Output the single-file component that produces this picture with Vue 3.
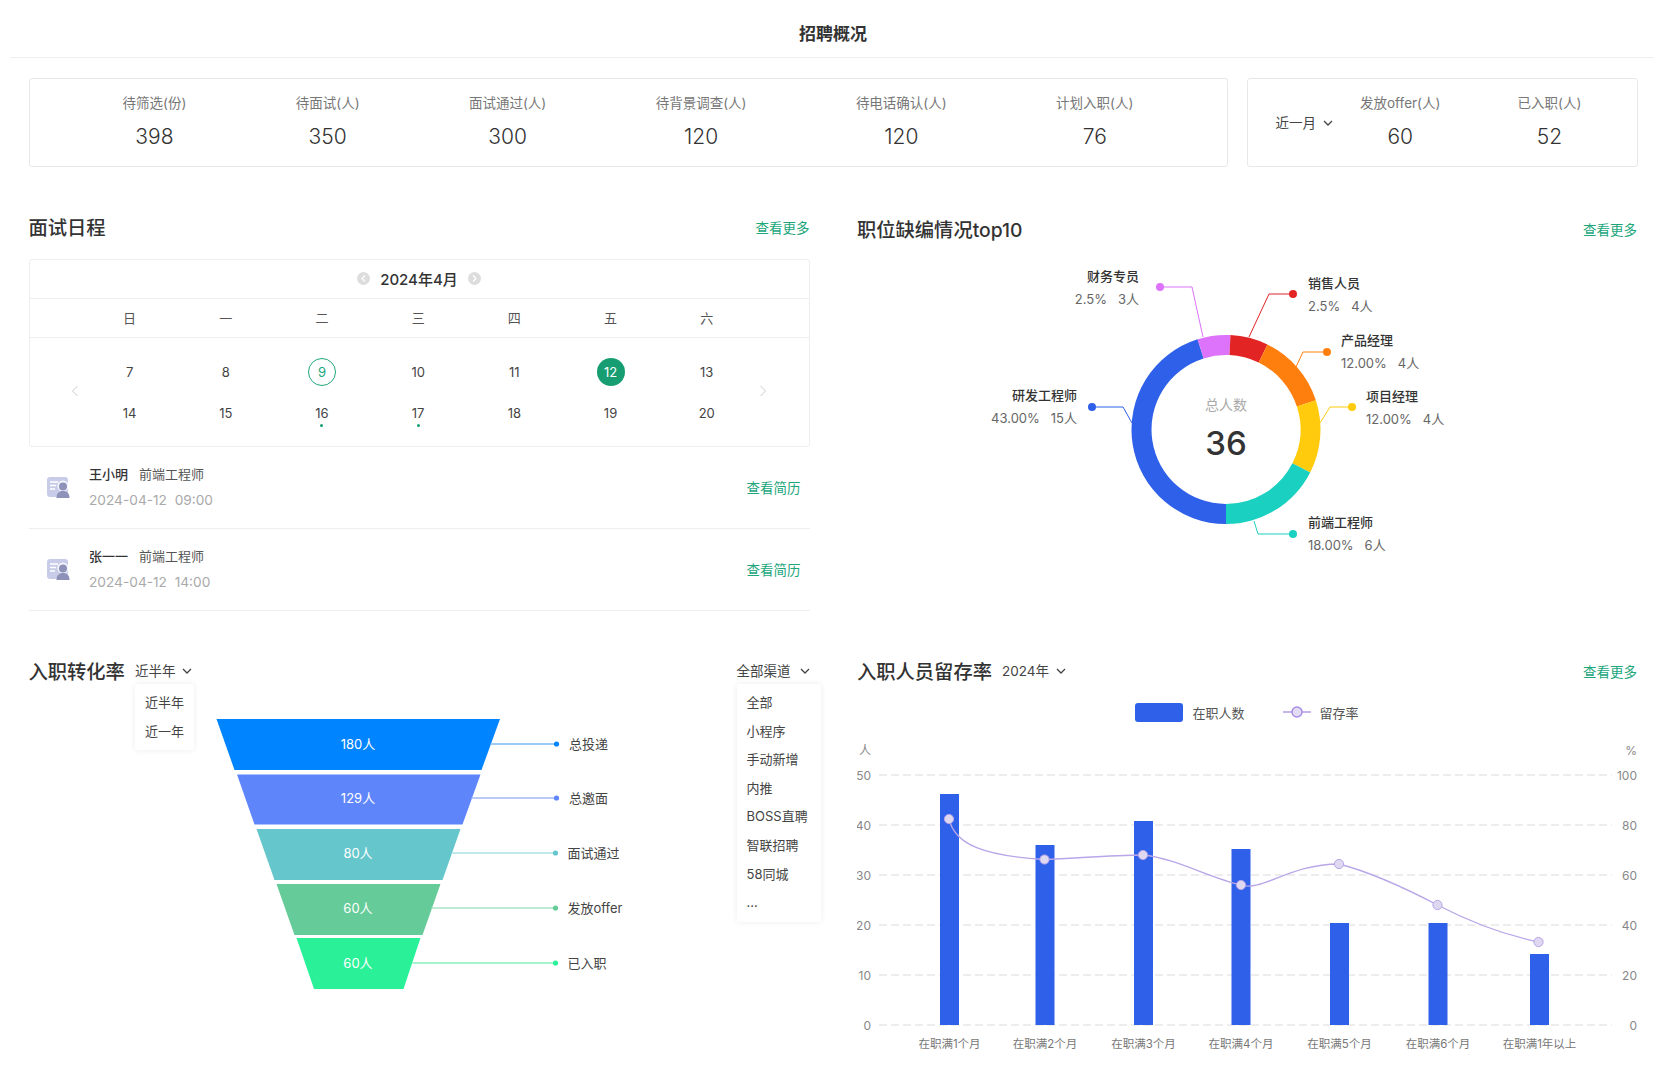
<template>
  <div class="page">
    <div class="top-title">招聘概况</div>

    <div class="stats">
      <div class="stat-box stat-main">
        <div v-for="s in mainStats" :key="s.label" class="stat">
          <div class="stat-label">{{ s.label }}</div>
          <div class="stat-value">{{ s.value }}</div>
        </div>
      </div>
      <div class="stat-box stat-side">
        <div class="filter filter-range">近一月
          <svg class="chev" width="10" height="6" viewBox="0 0 10 6"><polyline points="1,1 5,5 9,1" /></svg>
        </div>
        <div v-for="s in sideStats" :key="s.label" class="stat">
          <div class="stat-label">{{ s.label }}</div>
          <div class="stat-value">{{ s.value }}</div>
        </div>
      </div>
    </div>

    <div class="grid">
      <!-- 面试日程 -->
      <section class="panel">
        <div class="panel-head">
          <h2>面试日程</h2>
          <a class="more">查看更多</a>
        </div>
        <div class="calendar">
          <div class="cal-head">
            <span class="round-btn"><svg width="5" height="7" viewBox="0 0 5 7"><polyline points="4,0.5 1,3.5 4,6.5" /></svg></span>
            <span class="cal-month">2024年4月</span>
            <span class="round-btn"><svg width="5" height="7" viewBox="0 0 5 7"><polyline points="1,0.5 4,3.5 1,6.5" /></svg></span>
          </div>
          <div class="cal-week">
            <span v-for="w in weekdays" :key="w">{{ w }}</span>
          </div>
          <div class="cal-body">
            <svg class="cal-arrow left" width="8" height="12" viewBox="0 0 8 12"><polyline points="6.5,1 1.5,6 6.5,11" /></svg>
            <div class="cal-days">
              <div v-for="d in days" :key="d.n" class="day">
                <span class="day-num" :class="{ today: d.today, active: d.active }">{{ d.n }}</span>
                <i v-if="d.dot" class="day-dot"></i>
              </div>
            </div>
            <svg class="cal-arrow right" width="8" height="12" viewBox="0 0 8 12"><polyline points="1.5,1 6.5,6 1.5,11" /></svg>
          </div>
        </div>
        <div v-for="p in interviews" :key="p.name" class="person">
          <svg class="person-icon" width="24" height="22" viewBox="0 0 24 22">
            <rect x="0" y="0" width="21" height="20" rx="3" fill="#c8cce9" />
            <path d="M3 5h8M3 8.5h6M3 12h5" stroke="#fff" stroke-width="1.3" fill="none" />
            <circle cx="16" cy="9" r="5.6" fill="#fff" opacity="0.8" />
            <circle cx="16" cy="9.5" r="4" fill="#8e92b8" />
            <path d="M9.5 21c0-5 3-7 6.5-7s6.5 2 6.5 7z" fill="#8e92b8" />
          </svg>
          <div class="person-info">
            <div class="person-line"><b>{{ p.name }}</b><span>前端工程师</span></div>
            <div class="person-time">{{ p.time }}</div>
          </div>
          <a class="more">查看简历</a>
        </div>
      </section>

      <!-- 职位缺编 -->
      <section class="panel panel-shift">
        <div class="panel-head">
          <h2>职位缺编情况top10</h2>
          <a class="more">查看更多</a>
        </div>
        <svg class="chart pie-chart" width="780" height="363" viewBox="857 247 780 363">
          <path v-for="a in arcs" :key="a.color" :d="a.d" :fill="a.color" />
          <g v-for="l in pieLabels" :key="l.name">
            <polyline :points="l.line" :stroke="l.color" stroke-width="1" fill="none" />
            <circle :cx="l.dot[0]" :cy="l.dot[1]" r="4" :fill="l.color" />
            <text :x="l.x" :y="l.y" :text-anchor="l.anchor" class="pie-name">{{ l.name }}</text>
            <text :x="l.x" :y="l.y + 23" :text-anchor="l.anchor" class="pie-val">{{ l.val }}</text>
          </g>
          <text x="1226" y="411" text-anchor="middle" class="pie-total">总人数</text>
          <text x="1226" y="456" text-anchor="middle" class="pie-num">36</text>
        </svg>
      </section>

      <!-- 入职转化率 -->
      <section class="panel">
        <div class="panel-head">
          <h2>入职转化率</h2>
          <div class="filter filter-left">近半年
            <svg class="chev" width="10" height="6" viewBox="0 0 10 6"><polyline points="1,1 5,5 9,1" /></svg>
            <ul class="menu menu-range">
              <li>近半年</li>
              <li>近一年</li>
            </ul>
          </div>
          <div class="filter filter-right">全部渠道
            <svg class="chev" width="10" height="6" viewBox="0 0 10 6"><polyline points="1,1 5,5 9,1" /></svg>
            <ul class="menu menu-channel">
              <li v-for="c in channels" :key="c">{{ c }}</li>
            </ul>
          </div>
        </div>
        <svg class="chart" width="781" height="310" viewBox="28.5 685 781 310">
          <g v-for="f in funnel" :key="f.name">
            <polygon :points="f.points" :fill="f.color" />
            <text x="357.5" :y="f.y + 5" text-anchor="middle" class="funnel-num">{{ f.num }}</text>
            <line :x1="f.lineX" :y1="f.y" :x2="f.dotX" :y2="f.y" :stroke="f.line" stroke-width="1.6" />
            <circle :cx="f.dotX" :cy="f.y" r="2.6" :fill="f.color" />
            <text :x="f.textX" :y="f.y + 5" class="funnel-name">{{ f.name }}</text>
          </g>
        </svg>
      </section>

      <!-- 留存率 -->
      <section class="panel">
        <div class="panel-head">
          <h2>入职人员留存率</h2>
          <div class="filter filter-left">2024年
            <svg class="chev" width="10" height="6" viewBox="0 0 10 6"><polyline points="1,1 5,5 9,1" /></svg>
          </div>
          <a class="more more-right">查看更多</a>
        </div>
        <div class="legend">
          <i class="legend-bar"></i><span>在职人数</span>
          <svg class="legend-line" width="28" height="14" viewBox="0 0 28 14">
            <line x1="0" y1="7" x2="28" y2="7" stroke="#b29de6" stroke-width="1.5" />
            <circle cx="14" cy="7" r="5" fill="#e3dcf5" stroke="#a88fe2" stroke-width="1.5" />
          </svg>
          <span>留存率</span>
        </div>
        <svg class="chart" width="780" height="325" viewBox="857 735 780 325">
          <text x="865" y="755" text-anchor="middle" class="axis">人</text>
          <text x="1637" y="755" text-anchor="end" class="axis">%</text>
          <g v-for="(v, i) in [0, 10, 20, 30, 40, 50]" :key="v">
            <line x1="879" x2="1612" :y1="1025 - i * 50" :y2="1025 - i * 50" class="grid-line" />
            <text x="871" :y="1029.5 - i * 50" text-anchor="end" class="axis">{{ v }}</text>
            <text x="1637" :y="1029.5 - i * 50" text-anchor="end" class="axis">{{ v * 2 }}</text>
          </g>
          <rect v-for="b in bars" :key="b.x" :x="b.x" :y="b.top" width="19" :height="1025 - b.top" fill="#2f60ea" />
          <text v-for="b in bars" :key="b.label" :x="b.x + 9.5" y="1048" text-anchor="middle" class="axis-x">{{ b.label }}</text>
          <path d="M949 819C955 845 985 856 1044.5 859.5C1075 858.5 1110 855 1143 855C1175 858 1210 878 1241 885C1262 892 1290 864 1339 864C1370 872 1405 888 1437.5 905C1470 922 1505 935 1538.5 942" fill="none" stroke="#b8a6e8" stroke-width="1.3" />
          <circle v-for="p in linePoints" :key="p[0]" :cx="p[0]" :cy="p[1]" r="4.6" fill="#dfd8f1" stroke="#b8a6e8" stroke-width="1" />
        </svg>
      </section>
    </div>
  </div>
</template>

<script setup>
const mainStats = [
  { label: '待筛选(份)', value: 398 },
  { label: '待面试(人)', value: 350 },
  { label: '面试通过(人)', value: 300 },
  { label: '待背景调查(人)', value: 120 },
  { label: '待电话确认(人)', value: 120 },
  { label: '计划入职(人)', value: 76 }
]
const sideStats = [
  { label: '发放offer(人)', value: 60 },
  { label: '已入职(人)', value: 52 }
]

const weekdays = ['日', '一', '二', '三', '四', '五', '六']
const days = [7, 8, 9, 10, 11, 12, 13, 14, 15, 16, 17, 18, 19, 20].map(n => ({
  n,
  today: n === 9,
  active: n === 12,
  dot: n === 16 || n === 17
}))

const interviews = [
  { name: '王小明', time: '2024-04-12  09:00' },
  { name: '张一一', time: '2024-04-12  14:00' }
]

const channels = ['全部', '小程序', '手动新增', '内推', 'BOSS直聘', '智联招聘', '58同城', '...']

// 环形图，角度从12点方向顺时针
const cx = 1226
const cy = 430.5
const arcPath = (from, to, r1 = 94.5, r2 = 74.5) => {
  const p = (deg, r) => {
    const t = (deg * Math.PI) / 180
    return `${(cx + r * Math.sin(t)).toFixed(2)} ${(cy - r * Math.cos(t)).toFixed(2)}`
  }
  const large = to - from > 180 ? 1 : 0
  return `M${p(from, r1)}A${r1} ${r1} 0 ${large} 1 ${p(to, r1)}L${p(to, r2)}A${r2} ${r2} 0 ${large} 0 ${p(from, r2)}Z`
}
const arcs = [
  { color: '#2f60ea', from: 180, to: 342.5 },
  { color: '#dd72fb', from: 342.5, to: 362.7 },
  { color: '#e22424', from: 2.7, to: 26 },
  { color: '#ff7f0e', from: 26, to: 72 },
  { color: '#ffcb0c', from: 72, to: 117 },
  { color: '#1ad0c0', from: 117, to: 180 }
].map(a => ({ color: a.color, d: arcPath(a.from, a.to) }))

const pieLabels = [
  { name: '财务专员', val: '2.5%   3人', color: '#dd72fb', x: 1139, y: 282, anchor: 'end', dot: [1160, 288], line: '1160,288 1192,288 1203,338' },
  { name: '销售人员', val: '2.5%   4人', color: '#e22424', x: 1308, y: 289, anchor: 'start', dot: [1293, 295], line: '1293,295 1269,295 1249,338' },
  { name: '产品经理', val: '12.00%   4人', color: '#ff7f0e', x: 1341, y: 346, anchor: 'start', dot: [1327, 353], line: '1327,353 1303,353 1295,370' },
  { name: '项目经理', val: '12.00%   4人', color: '#ffcb0c', x: 1366, y: 402, anchor: 'start', dot: [1352, 408], line: '1352,408 1330,408 1320,424' },
  { name: '前端工程师', val: '18.00%   6人', color: '#1ad0c0', x: 1308, y: 528, anchor: 'start', dot: [1293, 535], line: '1293,535 1258,535 1254,522' },
  { name: '研发工程师', val: '43.00%   15人', color: '#2f60ea', x: 1077, y: 401, anchor: 'end', dot: [1092, 408], line: '1092,408 1123,408 1132,424' }
]

const funnel = [
  { name: '总投递', num: '180人', color: '#0084ff', line: '#7dbdf5', y: 743, lineX: 490, dotX: 556, textX: 568.5, points: '216,718 499.5,718 481,769 234,769' },
  { name: '总邀面', num: '129人', color: '#5f85fb', line: '#a3b8f6', y: 797, lineX: 471, dotX: 556, textX: 568.5, points: '236.5,773.5 480,773.5 462,823.5 254,823.5' },
  { name: '面试通过', num: '80人', color: '#65c6cb', line: '#a9e0e3', y: 852, lineX: 452, dotX: 555, textX: 567, points: '256,828 460,828 442,879 274,879' },
  { name: '发放offer', num: '60人', color: '#65cb98', line: '#a9e3c6', y: 907, lineX: 431, dotX: 555, textX: 567, points: '276,883 440,883 422,934 294,934' },
  { name: '已入职', num: '60人', color: '#2af098', line: '#87f0c0', y: 962, lineX: 412, dotX: 555, textX: 567, points: '296,937 420,937 403,988 313.5,988' }
]

const bars = [
  { x: 940, top: 794, label: '在职满1个月' },
  { x: 1035.5, top: 845, label: '在职满2个月' },
  { x: 1134, top: 821, label: '在职满3个月' },
  { x: 1231.5, top: 849, label: '在职满4个月' },
  { x: 1330, top: 923, label: '在职满5个月' },
  { x: 1428.5, top: 923, label: '在职满6个月' },
  { x: 1530, top: 954, label: '在职满1年以上' }
]
const linePoints = [
  [949, 819], [1044.5, 859.5], [1143, 855], [1241, 885], [1339, 864], [1437.5, 905], [1538.5, 942]
]
</script>

<style>
html, body {
  background: #fff;
}
</style>

<style scoped>
.page {
  width: 1666px;
  height: 1080px;
  box-sizing: border-box;
  padding: 0 28.5px;
  overflow: hidden;
  font-family: Inter, "Noto Sans CJK SC", sans-serif;
  color: #333;
  background: #fff;
}

.top-title {
  box-sizing: border-box;
  height: 58px;
  line-height: 68px;
  margin: 0 -16px 0 -19px;
  padding-left: 3px;
  text-align: center;
  font-size: 17px;
  font-weight: 600;
  border-bottom: 1px solid #eee;
}

.stats {
  display: flex;
  gap: 19px;
  margin-top: 20px;
}

.stat-box {
  display: flex;
  align-items: center;
  box-sizing: border-box;
  height: 89px;
  border: 1.5px solid #e8e8e8;
  border-radius: 3px;
}

.stat-main {
  justify-content: space-between;
  width: 1199px;
  padding: 0 93px;
}

.stat-side {
  gap: 77px;
  width: 391px;
  padding: 0 0 0 28px;
}

.filter-range {
  margin-right: -50px;
}

.stat {
  padding-bottom: 1px;
  text-align: center;
}

.stat-label {
  font-size: 13.5px;
  line-height: 20px;
  color: #777;
}

.stat-value {
  margin-top: 9px;
  font-size: 21px;
  font-weight: 300;
  line-height: 30px;
  color: #333;
}

.filter {
  position: relative;
  display: flex;
  align-items: center;
  gap: 7px;
  font-size: 13.5px;
  line-height: 20px;
  color: #444;
  white-space: nowrap;
}

.chev {
  fill: none;
  stroke: #444;
  stroke-width: 1.3;
}

.grid {
  display: grid;
  grid-template-columns: 781px 780px;
  column-gap: 47.5px;
  row-gap: 45px;
  margin-top: 45px;
}

.panel-shift {
  padding-top: 2px;
}

.pie-chart {
  margin-top: 2px;
}

.panel-head {
  display: flex;
  align-items: center;
  justify-content: space-between;
  height: 30px;
}

.panel-head h2 {
  margin: 0;
  font-size: 19.3px;
  font-weight: 500;
  color: #333;
}

.filter-left {
  margin-left: 10px;
  margin-right: auto;
}

.filter-right {
  gap: 9px;
}

.more {
  font-size: 13.5px;
  color: #20a67b;
}

.more-right {
  margin-left: auto;
}

.calendar {
  margin-top: 17px;
  border: 1px solid #eee;
  border-radius: 3px;
}

.cal-head {
  display: flex;
  align-items: center;
  justify-content: center;
  gap: 10px;
  box-sizing: content-box;
  height: 37px;
  padding-bottom: 1px;
  border-bottom: 1px solid #eee;
}

.cal-month {
  font-size: 15px;
  font-weight: 500;
  color: #333;
}

.round-btn {
  display: flex;
  align-items: center;
  justify-content: center;
  width: 13px;
  height: 13px;
  border-radius: 50%;
  background: #ddd;
}

.round-btn svg {
  fill: none;
  stroke: #fff;
  stroke-width: 1.2;
}

.cal-week {
  display: grid;
  grid-template-columns: repeat(7, 96.2px);
  height: 38px;
  line-height: 38px;
  padding: 0 52px;
  border-bottom: 1px solid #eee;
  text-align: center;
  font-size: 13px;
  color: #555;
}

.cal-body {
  position: relative;
  padding: 13px 52px 13px;
}

.cal-days {
  display: grid;
  grid-template-columns: repeat(7, 96.2px);
  grid-auto-rows: 41px;
}

.day {
  position: relative;
  display: flex;
  align-items: center;
  justify-content: center;
}

.day-num {
  display: flex;
  align-items: center;
  justify-content: center;
  box-sizing: border-box;
  width: 28px;
  height: 28px;
  border-radius: 50%;
  font-size: 13px;
  color: #444;
}

.day-num.today {
  border: 1px solid #20a67b;
  color: #20a67b;
}

.day-num.active {
  background: #169e72;
  color: #fff;
}

.day-dot {
  position: absolute;
  left: 50%;
  top: 32px;
  width: 3px;
  height: 3px;
  margin-left: -1.5px;
  border-radius: 50%;
  background: #169e72;
}

.cal-arrow {
  position: absolute;
  top: 47px;
  fill: none;
  stroke: #ccc;
  stroke-width: 1;
}

.cal-arrow.left {
  left: 41px;
}

.cal-arrow.right {
  right: 42px;
}

.person {
  display: flex;
  align-items: center;
  height: 82px;
  box-sizing: border-box;
  padding: 0 9px 2px 18px;
  border-bottom: 1px solid #eee;
}

.person-icon {
  flex: none;
  margin-top: 2px;
}

.person-info {
  flex: 1;
  margin-left: 18.5px;
}

.person-line {
  display: flex;
  gap: 11px;
  font-size: 13px;
  line-height: 20px;
  color: #555;
}

.person-line b {
  font-weight: 500;
  color: #333;
}

.person-time {
  margin-top: 6px;
  font-size: 13.7px;
  line-height: 20px;
  color: #aaa;
  white-space: pre;
}

.menu {
  position: absolute;
  top: 23px;
  left: 0;
  z-index: 2;
  margin: 0;
  padding: 4px 10px 5px;
  list-style: none;
  background: #fff;
  box-shadow: 0 0 6px rgba(0, 0, 0, 0.08);
  border-radius: 2px;
  color: #444;
}

.menu li {
  line-height: 28.6px;
  font-size: 13px;
}

.menu-channel {
  width: 64px;
}

.chart {
  display: block;
}

.pie-name {
  font-size: 13px;
  font-weight: 500;
  fill: #333;
}

.pie-val {
  font-size: 13px;
  fill: #666;
  white-space: pre;
}

.pie-total {
  font-size: 14px;
  fill: #aaa;
}

.pie-num {
  font-size: 33px;
  font-weight: 500;
  fill: #333;
}

.funnel-num {
  font-size: 13px;
  fill: #fff;
}

.funnel-name {
  font-size: 13px;
  fill: #444;
}

.legend {
  display: flex;
  align-items: center;
  justify-content: center;
  height: 20px;
  margin-top: 16px;
  font-size: 13px;
  color: #555;
}

.legend-bar {
  width: 48px;
  height: 19px;
  margin-right: 9px;
  border-radius: 3px;
  background: #2f60ea;
}

.legend-line {
  margin: 0 9px 0 38px;
}

.legend + .chart {
  margin-top: 13px;
}

.grid-line {
  stroke: #dcdcdc;
  stroke-dasharray: 8 4;
  stroke-width: 1;
}

.axis {
  font-size: 12px;
  fill: #888;
}

.axis-x {
  font-size: 11.5px;
  fill: #777;
}
</style>
